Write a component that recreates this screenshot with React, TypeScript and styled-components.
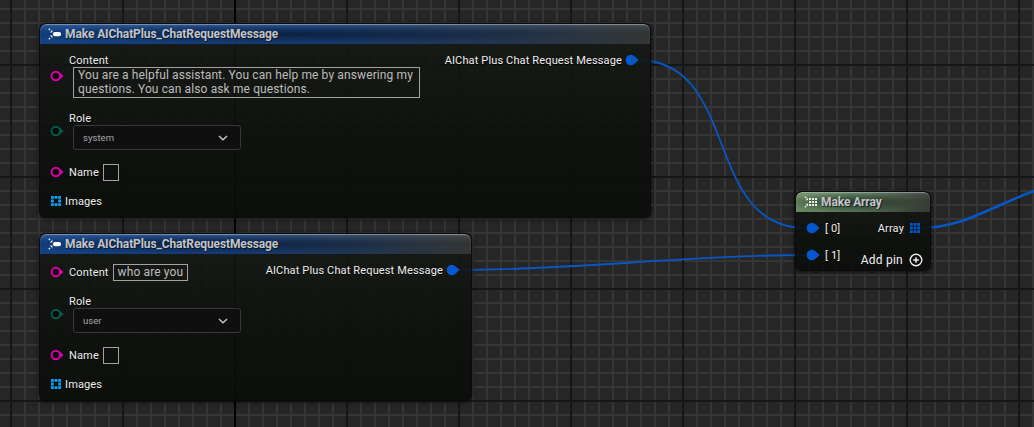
import React from 'react';
import styled, { createGlobalStyle } from 'styled-components';

const Global = createGlobalStyle`
  * { box-sizing: border-box; }
  body { margin: 0; overflow: hidden; background: #262626; }
`;

const MINOR = '#353535';
const MAJOR = '#161616';

const Graph = styled.main`
  position: relative;
  width: 1034px;
  height: 427px;
  overflow: hidden;
  font-family: Roboto, sans-serif;
  color: #efefef;
  background-color: #262626;
  background-image:
    linear-gradient(#000, #000),
    linear-gradient(90deg, ${MAJOR} 2px, transparent 2px),
    linear-gradient(${MAJOR} 2px, transparent 2px),
    linear-gradient(90deg, ${MINOR} 2px, transparent 2px),
    linear-gradient(${MINOR} 2px, transparent 2px);
  background-size: 2px 100%, 112px 112px, 112px 112px, 14px 14px, 14px 14px;
  background-position: 234px 0, 10px 0, 0 64px, 10px 0, 0 8px;
  background-repeat: no-repeat, repeat, repeat, repeat, repeat;
`;

const Wires = styled.svg`
  position: absolute;
  inset: 0;
  fill: none;
  stroke: #0757c4;
`;

const Node = styled.section<{ $x: number; $y: number; $w: number; $h: number }>`
  position: absolute;
  left: ${p => p.$x}px;
  top: ${p => p.$y}px;
  width: ${p => p.$w}px;
  height: ${p => p.$h}px;
  display: flex;
  flex-direction: column;
  border-radius: 6px;
  overflow: hidden;
  background: linear-gradient(rgba(23, 25, 22, 0.88), rgba(12, 15, 11, 0.91) 60%, rgba(10, 13, 10, 0.92));
  box-shadow: 0 0 0 1px #0b0b0b, 0 1px 5px 1px rgba(0, 0, 0, 0.65);
`;

const tints = {
  blue: 'linear-gradient(90deg, rgba(19,68,138,.95), rgba(21,62,124,.92) 45%, rgba(42,68,104,.65) 78%, rgba(78,81,83,.5))',
  green: 'linear-gradient(90deg, #69895f, #527150 45%, rgba(74,92,71,.85) 75%, rgba(74,80,74,.6))',
};

const Header = styled.header<{ $tint: keyof typeof tints }>`
  flex: none;
  display: flex;
  align-items: center;
  gap: 4px;
  height: 20px;
  padding: 0 0 0 8px;
  border-radius: 6px 6px 0 0;
  background:
    radial-gradient(ellipse 50% 45% at 40% 52%, rgba(5, 12, 22, 0.55), transparent),
    linear-gradient(rgba(255, 255, 255, 0.1), transparent 40%),
    ${p => tints[p.$tint]};
  box-shadow: inset 0 1px 1px rgba(190, 205, 220, 0.55);
`;

const Title = styled.h2`
  margin: 0;
  font-size: 12px;
  line-height: 20px;
  font-weight: 700;
  letter-spacing: -0.11px;
  color: #c3c5c8;
  white-space: nowrap;
  text-shadow: 1px 1px 0 rgba(0, 0, 0, 0.55);
`;

const Body = styled.div`
  flex: 1;
  display: flex;
  justify-content: space-between;
  padding: 0 9px 0 10px;
`;

const Column = styled.div<{ $end?: boolean }>`
  display: flex;
  flex-direction: column;
  align-items: ${p => (p.$end ? 'flex-end' : 'flex-start')};
  padding-top: 9px;
`;

const PinRow = styled.div<{ $h: number; $mt?: number; $gap?: number; $shift?: number }>`
  display: flex;
  align-items: center;
  gap: ${p => p.$gap ?? 5}px;
  height: ${p => p.$h}px;
  margin-top: ${p => p.$mt ?? 0}px;
  margin-left: ${p => p.$shift ?? 0}px;
  margin-right: ${p => -(p.$shift ?? 0)}px;
`;

const Stack = styled.div`
  display: flex;
  flex-direction: column;
`;

const Label = styled.span`
  height: 14px;
  padding-top: 1px;
  font-size: 11px;
  line-height: 14px;
  letter-spacing: 0.14px;
  white-space: pre;
  text-shadow: 0 1px 0 #000;
`;

const TextField = styled.div<{ $w: number; $h: number }>`
  width: ${p => p.$w}px;
  height: ${p => p.$h}px;
  padding: 0 4px;
  border: 1px solid #a2a2a2;
  font-size: 12px;
  line-height: 14px;
  letter-spacing: 0.12px;
  color: #bdbdbd;
  white-space: pre;

  ${Label} + & {
    margin-left: -1px;
  }
`;

const Indent = styled.div`
  margin-left: 4px;
`;

const Select = styled.div`
  display: flex;
  align-items: center;
  justify-content: space-between;
  width: 168px;
  height: 25px;
  margin-left: 4px;
  padding: 0 12px 0 9px;
  border: 1px solid #373737;
  border-radius: 3px;
  background: #0f0f0f;
  font-size: 9.5px;
  letter-spacing: 0.05px;
  color: #a8a8a8;
`;

const AddPin = styled.div`
  display: flex;
  align-items: center;
  gap: 6px;
  height: 16px;
  margin-top: 17px;
  margin-right: -2px;
  font-size: 12px;
  letter-spacing: 0.25px;
  color: #f2f2f2;
`;

const Pin = ({ color, filled }: { color: string; filled?: boolean }) => (
  <svg width="14" height="12" viewBox="0 0 14 12">
    <path d="M10 2.8 13.6 6 10 9.2Z" fill={color} />
    <circle cx="5.8" cy="6" r={filled ? 5.2 : 4.2} fill={filled ? color : '#080808'} stroke={filled ? 'none' : color} strokeWidth="2" />
  </svg>
);

const ArrayPin = ({ color, hollow }: { color: string; hollow?: boolean }) => (
  <svg width="10" height="10" viewBox="0 0 10 10">
    {[0, 1, 2].flatMap(r =>
      [0, 1, 2].map(c =>
        hollow && r === 1 && c === 1 ? null : (
          <rect key={`${r}${c}`} x={c * 3.6} y={r * 3.6} width="2.8" height="2.8" fill={color} />
        ),
      ),
    )}
    {hollow && <path d="M2.5 1.5h5M2.5 8.5h5M1.5 2.5v5M8.5 2.5v5" stroke={color} opacity="0.5" />}
  </svg>
);

const StructIcon = () => (
  <svg width="13" height="12" viewBox="0 0 13 12">
    <path d="M.8 .8 2 2M.8 11.2 2 10" stroke="#e8edf2" strokeWidth="1.4" />
    <path d="M4.4 1.8v2.6H1.8ZM4.4 10.2V7.6H1.8Z" fill="#e8edf2" />
    <rect x="5" y="4" width="8" height="4.2" rx="2" fill="#fff" />
  </svg>
);

const ArrayIcon = () => (
  <svg width="13" height="12" viewBox="0 0 13 12">
    <path d="M.8 .6 2.2 2M.8 11.4 2.2 10" stroke="#e6ece6" strokeWidth="1.3" />
    <path d="M4 1.6v2.6H1.4ZM4 10.4V7.8H1.4Z" fill="#e6ece6" />
    {[0, 1, 2].flatMap(r =>
      [0, 1, 2].map(c => <rect key={`${r}${c}`} x={5 + c * 3} y={2 + r * 3} width="2" height="2" fill="#eef2ee" />),
    )}
  </svg>
);

const Chevron = () => (
  <svg width="10" height="6" viewBox="0 0 10 6">
    <path d="m1 1 4 3.7L9 1" fill="none" stroke="#c4c4c4" strokeWidth="1.5" />
  </svg>
);

const PlusCircle = () => (
  <svg width="14" height="14" viewBox="0 0 14 14">
    <circle cx="7" cy="7" r="5.8" fill="none" stroke="#f0f0f0" strokeWidth="1.4" />
    <path d="M4.2 7h5.6M7 4.2v5.6" stroke="#f0f0f0" strokeWidth="1.5" />
  </svg>
);

const PINK = '#d800aa';
const TEAL = '#04594d';
const BLUE = '#0557cd';
const CYAN = '#08a0ee';

interface MessageNodeProps {
  y: number;
  w: number;
  h: number;
  role: string;
  content: string;
  multiline?: boolean;
}

const MessageNode = ({ y, w, h, role, content, multiline }: MessageNodeProps) => (
  <Node $x={40} $y={y} $w={w} $h={h}>
    <Header $tint="blue">
      <StructIcon />
      <Title>Make AIChatPlus_ChatRequestMessage</Title>
    </Header>
    <Body>
      <Column>
        {multiline ? (
          <PinRow $h={45}>
            <Pin color={PINK} />
            <Stack>
              <Label>Content</Label>
              <Indent>
                <TextField $w={347} $h={31}>{content}</TextField>
              </Indent>
            </Stack>
          </PinRow>
        ) : (
          <PinRow $h={18}>
            <Pin color={PINK} />
            <Label>Content</Label>
            <TextField $w={75} $h={17}>{content}</TextField>
          </PinRow>
        )}
        <PinRow $h={39} $mt={13}>
          <Pin color={TEAL} />
          <Stack>
            <Label>Role</Label>
            <Select>
              {role}
              <Chevron />
            </Select>
          </Stack>
        </PinRow>
        <PinRow $h={18} $mt={13}>
          <Pin color={PINK} />
          <Label>Name</Label>
          <TextField $w={16} $h={17} />
        </PinRow>
        <PinRow $h={14} $mt={13} $gap={4} $shift={1}>
          <ArrayPin color={CYAN} hollow />
          <Label>Images</Label>
        </PinRow>
      </Column>
      <Column $end>
        <PinRow $h={14} $gap={3} $shift={-2}>
          <Label>AIChat Plus Chat Request Message</Label>
          <Pin color={BLUE} filled />
        </PinRow>
      </Column>
    </Body>
  </Node>
);

export default function App() {
  return (
    <>
      <Global />
      <Graph>
        <Wires width="1034" height="427">
          <path d="M637 60C741 60 702 228 806 228" strokeWidth="1.8" />
          <path d="M458 270C578 270 686 255 806 255" strokeWidth="1.8" />
          <path d="M920 228C965 228 995 204 1036 190.5" strokeWidth="2.7" />
        </Wires>
        <MessageNode
          y={24}
          w={610}
          h={193}
          role="system"
          multiline
          content={'You are a helpful assistant. You can help me by answering my\nquestions. You can also ask me questions.'}
        />
        <MessageNode y={234} w={431} h={166} role="user" content="who are you" />
        <Node $x={796} $y={192} $w={134} $h={78}>
          <Header $tint="green">
            <ArrayIcon />
            <Title>Make Array</Title>
          </Header>
          <Body>
            <Column>
              <PinRow $h={14}>
                <Pin color={BLUE} filled />
                <Label>[ 0]</Label>
              </PinRow>
              <PinRow $h={14} $mt={13}>
                <Pin color={BLUE} filled />
                <Label>[ 1]</Label>
              </PinRow>
            </Column>
            <Column $end>
              <PinRow $h={14} $gap={6} $shift={-1}>
                <Label>Array</Label>
                <ArrayPin color={BLUE} />
              </PinRow>
              <AddPin>
                Add pin
                <PlusCircle />
              </AddPin>
            </Column>
          </Body>
        </Node>
      </Graph>
    </>
  );
}
